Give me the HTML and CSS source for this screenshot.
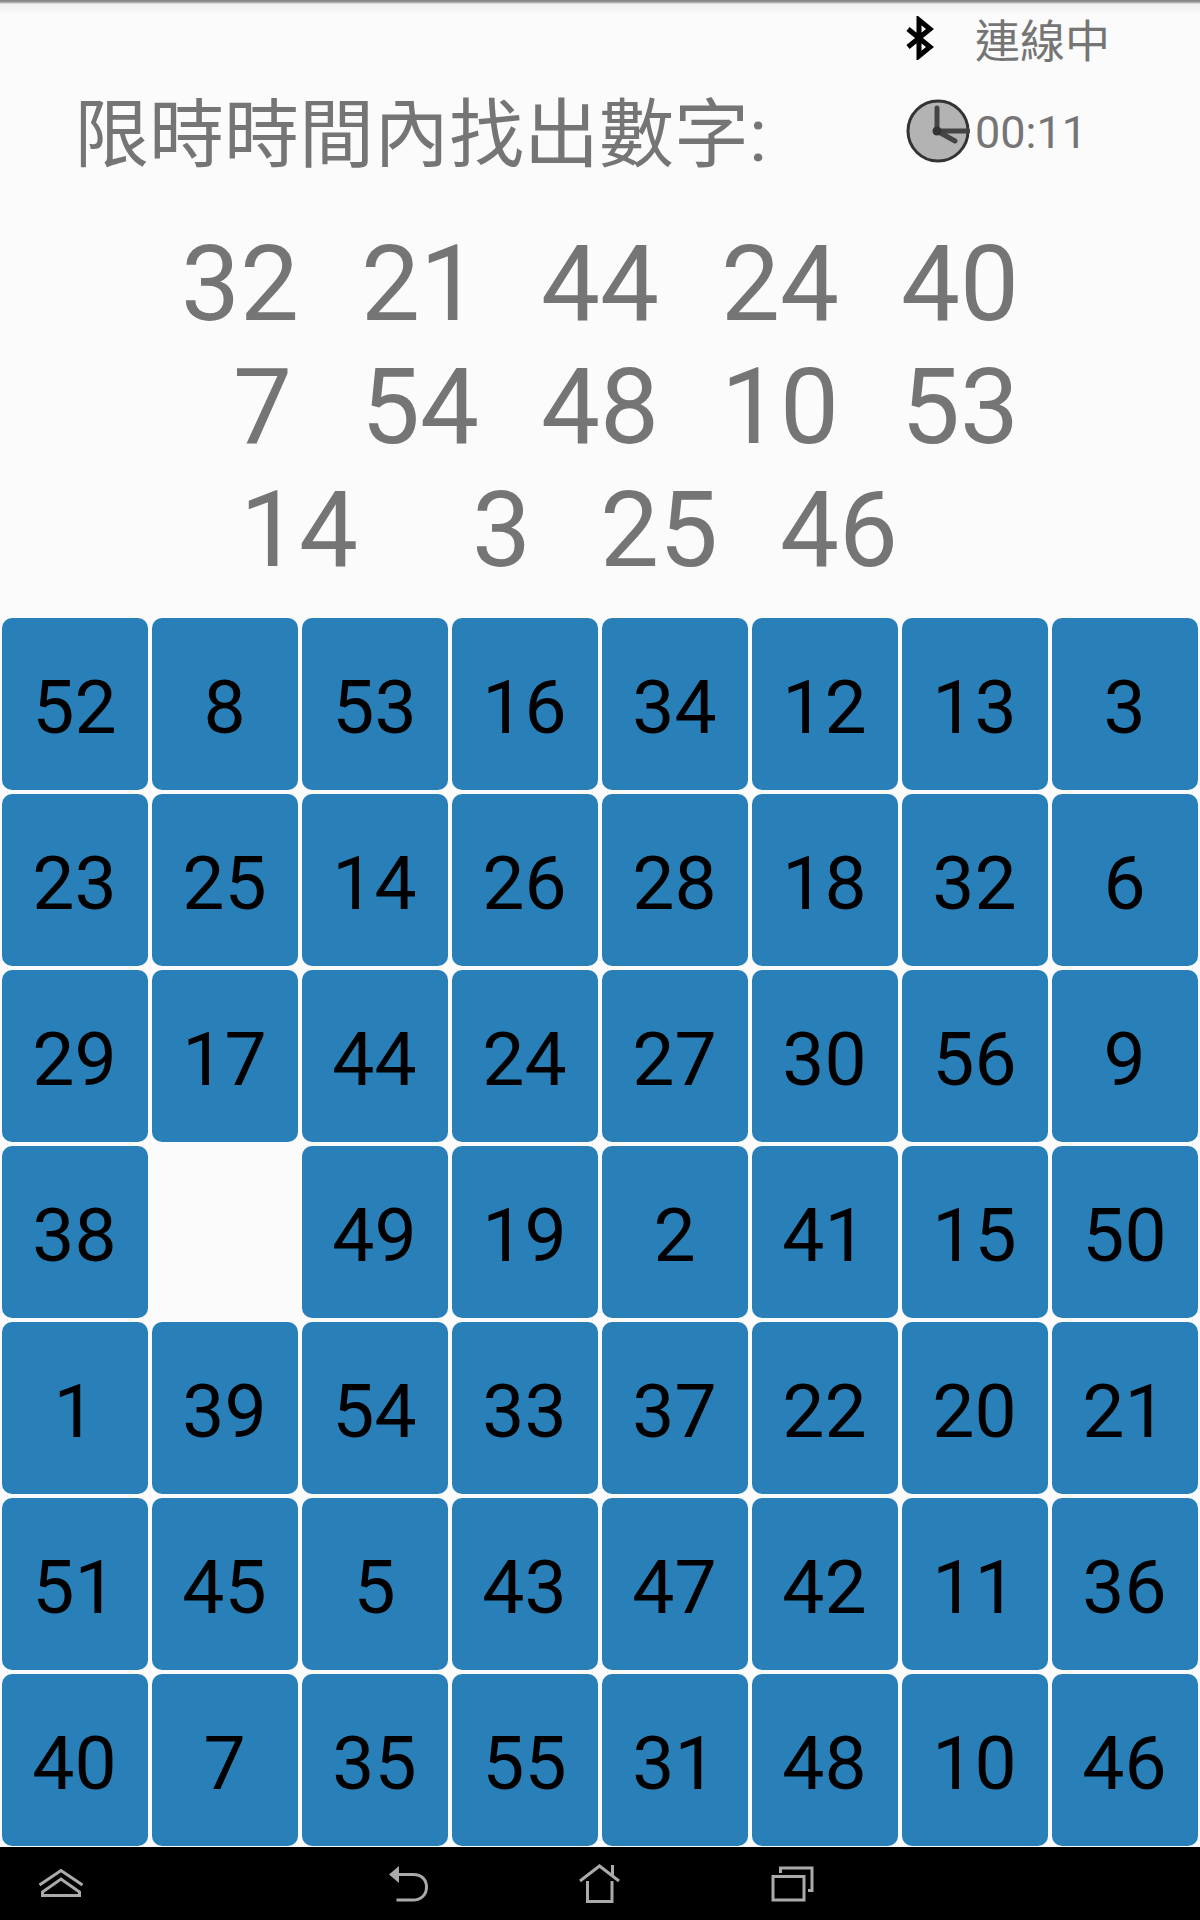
FILE: index.html
```html
<!DOCTYPE html>
<html lang="zh-Hant">
    <head>
        <title>限時時間內找出數字</title>
        <link rel="stylesheet" href="styles.css">
    </head>
    <body>
        <div class="header">
            <h1 class="title">限時時間內找出數字:</h1>
            <div class="status">
                <div class="status-row">
                    <svg class="bt-icon" width="30" height="44" viewBox="0 0 30 44">
                        <polyline points="2,13 24,31 13,40 13,4 24,13 2,31" fill="none" stroke="#000" stroke-width="5"/>
                    </svg>
                    <span class="status-text conn">連線中</span>
                </div>
                <div class="status-row timer">
                    <svg class="clock-icon" width="64" height="64" viewBox="0 0 64 64">
                        <circle cx="32" cy="32" r="30" fill="#b3b3b3" stroke="#333" stroke-width="3"/>
                        <path d="M31 9V32H62M31 32L49 42" fill="none" stroke="#444" stroke-width="5" stroke-linecap="round"/>
                        <circle cx="31" cy="32" r="4.5" fill="#333"/>
                    </svg>
                    <span class="status-text clock-text">00:11</span>
                </div>
            </div>
        </div>

        <div class="targets">
            <div class="target-row"><span>32</span><span>21</span><span>44</span><span>24</span><span>40</span></div>
            <div class="target-row"><span class="single">7</span><span>54</span><span>48</span><span>10</span><span>53</span></div>
            <div class="target-row last"><span>14</span><span class="single">3</span><span>25</span><span>46</span></div>
        </div>

        <div class="board">
            <div class="tile">52</div><div class="tile">8</div><div class="tile">53</div><div class="tile">16</div><div class="tile">34</div><div class="tile">12</div><div class="tile">13</div><div class="tile">3</div>
            <div class="tile">23</div><div class="tile">25</div><div class="tile">14</div><div class="tile">26</div><div class="tile">28</div><div class="tile">18</div><div class="tile">32</div><div class="tile">6</div>
            <div class="tile">29</div><div class="tile">17</div><div class="tile">44</div><div class="tile">24</div><div class="tile">27</div><div class="tile">30</div><div class="tile">56</div><div class="tile">9</div>
            <div class="tile">38</div><div class="tile empty"></div><div class="tile">49</div><div class="tile">19</div><div class="tile">2</div><div class="tile">41</div><div class="tile">15</div><div class="tile">50</div>
            <div class="tile">1</div><div class="tile">39</div><div class="tile">54</div><div class="tile">33</div><div class="tile">37</div><div class="tile">22</div><div class="tile">20</div><div class="tile">21</div>
            <div class="tile">51</div><div class="tile">45</div><div class="tile">5</div><div class="tile">43</div><div class="tile">47</div><div class="tile">42</div><div class="tile">11</div><div class="tile">36</div>
            <div class="tile">40</div><div class="tile">7</div><div class="tile">35</div><div class="tile">55</div><div class="tile">31</div><div class="tile">48</div><div class="tile">10</div><div class="tile">46</div>
        </div>

        <div class="navbar">
            <svg class="nav-menu" width="120" height="60" viewBox="0 0 120 60">
                <path d="M19.5 25L41 10.5L62.5 25M22.5 35.5V32L41 19L59.5 32V35.5Z" fill="none" stroke="#aaa" stroke-width="3"/>
            </svg>
            <svg class="nav-back" width="120" height="60" viewBox="0 0 120 60">
                <path d="M19 14.5L29 6V23Z" fill="#aaa"/>
                <path d="M27 14.5H43C52 14.5 56.5 20 56.5 27C56.5 35 51 40 43 40H26.5" fill="none" stroke="#aaa" stroke-width="3"/>
            </svg>
            <svg class="nav-home" width="120" height="60" viewBox="0 0 120 60">
                <path d="M30 21L49.5 6L69 21M62.5 5V16M37.5 21V41.5H62V21" fill="none" stroke="#aaa" stroke-width="3"/>
            </svg>
            <svg class="nav-recent" width="120" height="60" viewBox="0 0 120 60">
                <rect x="33" y="16.5" width="31" height="23.5" fill="none" stroke="#aaa" stroke-width="3"/>
                <path d="M40.5 13V8H72V30.5H68" fill="none" stroke="#aaa" stroke-width="3"/>
            </svg>
        </div>
    </body>
</html>
```

FILE: styles.css
```css
html, body {
    margin:0;
    padding:0;
}
body {
    width:1200px;
    height:1920px;
    overflow:hidden;
    background:#fbfbfb linear-gradient(#7d7d7d, #9a9a9a 2px, #efefef 4px, #fbfbfb 14px) no-repeat;
    background-size:100% 14px;
    font-family:Roboto, "Noto Sans CJK TC", sans-serif;
    color:#757575;
    display:flex;
    flex-direction:column;
}
.header {
    height:222px;
    display:flex;
    justify-content:space-between;
}
.title {
    margin:92px 0 0 74px;
    font-size:75px;
    line-height:86px;
    font-weight:normal;
}
.status {
    width:294px;
    padding-top:16px;
}
.status-row {
    height:44px;
    display:flex;
    align-items:center;
}
.status-row.timer {
    height:64px;
    margin-top:39px;
}
.status-text {
    font-size:44px;
    margin-left:8px;
}
.status-text.conn {
    margin-left:39px;
    font-size:45px;
}
.status-text.clock-text {
    margin-left:5px;
    padding-top:2px;
    font-size:45px;
}
.targets {
    height:396px;
    font-size:105px;
    line-height:123px;
}
.target-row {
    display:flex;
    padding-left:119px;
    padding-top:1px;
    margin-bottom:-1px;
}
.target-row.last {
    padding-left:178px;
}
.target-row span {
    width:180px;
    box-sizing:border-box;
    text-align:right;
}
.target-row span.single {
    padding-right:7px;
}
.board {
    display:grid;
    grid-template-columns:repeat(8, 146px);
    grid-auto-rows:172px;
    gap:4px;
    padding:0 2px;
}
.tile {
    background:#2980b9;
    border-radius:10px;
    color:#000;
    font-size:75px;
    padding:6px 1px 0 0;
    box-sizing:border-box;
    display:flex;
    align-items:center;
    justify-content:center;
}
.tile.empty {
    background:none;
}
.navbar {
    margin-top:1px;
    flex:1;
    background:#000;
    display:flex;
    padding:13px 0 0 20px;
}
.navbar svg {
    flex:none;
}
.nav-back {
    margin-left:230px;
}
.nav-home {
    margin-left:60px;
}
.nav-recent {
    margin-left:70px;
}
```
